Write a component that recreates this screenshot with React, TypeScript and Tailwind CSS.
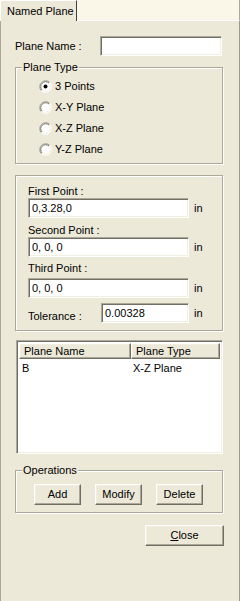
const sunken =
  "bg-white border border-t-[#ACA899] border-l-[#ACA899] border-b-white border-r-white shadow-[inset_1px_1px_0_#716F64,inset_-1px_-1px_0_#F1EFE2]";

const raised =
  "bg-[#ECE9D8] border border-t-white border-l-white border-b-[#716F64] border-r-[#716F64] shadow-[inset_-1px_-1px_0_#ACA899,inset_1px_1px_0_#F1EFE2]";

const etched =
  "border border-[#ACA899] shadow-[inset_1px_1px_0_#fff,1px_1px_0_#fff]";

const Radio = ({ checked, label }: { checked?: boolean; label: string }) => (
  <div className="flex items-center h-[13px]">
    <svg width="13" height="13" viewBox="0 0 13 13">
      <circle cx="6.5" cy="6.5" r="5.5" fill="#fff" />
      <path d="M2.26 10.74 A6 6 0 0 1 10.74 2.26" fill="none" stroke="#ACA899" />
      <path d="M10.74 2.26 A6 6 0 0 1 2.26 10.74" fill="none" stroke="#fff" />
      <path d="M2.97 10.03 A5 5 0 0 1 10.03 2.97" fill="none" stroke="#716F64" />
      <path d="M10.03 2.97 A5 5 0 0 1 2.97 10.03" fill="none" stroke="#F1EFE2" />
      {checked && <circle cx="6.5" cy="6.5" r="2" fill="#000" />}
    </svg>
    <span className="ml-[3px] leading-[13px]">{label}</span>
  </div>
);

const PointInput = ({ label, value }: { label: string; value: string }) => (
  <div className="flex flex-col">
    <div className="h-[13px] leading-[13px]">{label}</div>
    <div className="flex items-center">
      <div className={`${sunken} w-[161px] h-[20px] pl-[3px] flex items-center`}>{value}</div>
      <span className="ml-[5px]">in</span>
    </div>
  </div>
);

const Button = ({ children, className = "" }: { children: React.ReactNode; className?: string }) => (
  <div className={`${raised} h-[21px] flex items-center justify-center ${className}`}>{children}</div>
);

const App = () => {
  return (
    <div className="w-[240px] h-[601px] flex flex-col bg-[#FAF7E8] text-black text-[11px] font-['Liberation_Sans',Arial,sans-serif]">
      <div className="flex h-[21px]">
        <div className="w-[77px] h-[21px] bg-[#ECE9D8] border-l border-t border-l-white border-t-white border-r border-r-[#404040] pl-[6px] pt-[3px] leading-[14px]">
          Named Plane
        </div>
        <div className="flex-1 border-b border-b-white border-r border-r-[#ACA899]" />
      </div>

      <div className="flex-1 bg-[#ECE9D8] border-l border-l-[#ACA899] border-r border-r-[#9D9A8C] pl-[14px] pr-[16px] flex flex-col">
        <div className="mt-[15px] h-[20px] flex items-center">
          <span>Plane Name :</span>
          <div className={`${sunken} ml-auto mr-px w-[122px] h-[20px]`} />
        </div>

        <fieldset className={`${etched} mt-[5px] h-[103px]`}>
          <legend className="ml-[6px] px-px bg-[#ECE9D8] leading-[13px]">Plane Type</legend>
          <div className="pt-[6px] pl-[23px] flex flex-col gap-[8px]">
            <Radio checked label="3 Points" />
            <Radio label="X-Y Plane" />
            <Radio label="X-Z Plane" />
            <Radio label="Y-Z Plane" />
          </div>
        </fieldset>

        <div className={`${etched} mt-[11px] h-[156px] pl-[12px] pt-[9px] flex flex-col`}>
          <PointInput label="First Point :" value="0,3.28,0" />
          <div className="mt-[6px]">
            <PointInput label="Second Point :" value="0, 0, 0" />
          </div>
          <div className="mt-[5px]">
            <div className="h-[13px] leading-[13px]">Third Point :</div>
            <div className="flex items-center mt-[3px]">
              <div className={`${sunken} w-[161px] h-[20px] pl-[3px] flex items-center`}>0, 0, 0</div>
              <span className="ml-[5px]">in</span>
            </div>
          </div>
          <div className="flex items-center mt-[4px]">
            <span className="w-[73px] pt-[6px]">Tolerance :</span>
            <div className={`${sunken} w-[88px] h-[20px] pl-[3px] flex items-center`}>0.00328</div>
            <span className="ml-[5px]">in</span>
          </div>
        </div>

        <div className={`${sunken} mt-[9px] ml-px h-[114px] p-[2px] flex flex-col`}>
          <div className="flex h-[16px]">
            <div className={`${raised} w-[112px] pl-[4px] leading-[14px]`}>Plane Name</div>
            <div className={`${raised} flex-1 pl-[4px] leading-[14px]`}>Plane Type</div>
          </div>
          <div className="flex mt-[2px] h-[14px] leading-[14px]">
            <span className="w-[114px] pl-[3px]">B</span>
            <span>X-Z Plane</span>
          </div>
        </div>

        <fieldset className={`${etched} mt-[10px] h-[49px]`}>
          <legend className="ml-[6px] px-px bg-[#ECE9D8] leading-[13px]">Operations</legend>
          <div className="pt-[7px] pl-[18px] flex gap-[14px]">
            <Button className="w-[47px]">Add</Button>
            <Button className="w-[47px]">Modify</Button>
            <Button className="w-[47px]">Delete</Button>
          </div>
        </fieldset>

        <div className="mt-[12px] flex justify-end -mr-px">
          <Button className="w-[79px]">
            <span>
              <span className="underline">C</span>lose
            </span>
          </Button>
        </div>
      </div>
    </div>
  );
};

export default App;
